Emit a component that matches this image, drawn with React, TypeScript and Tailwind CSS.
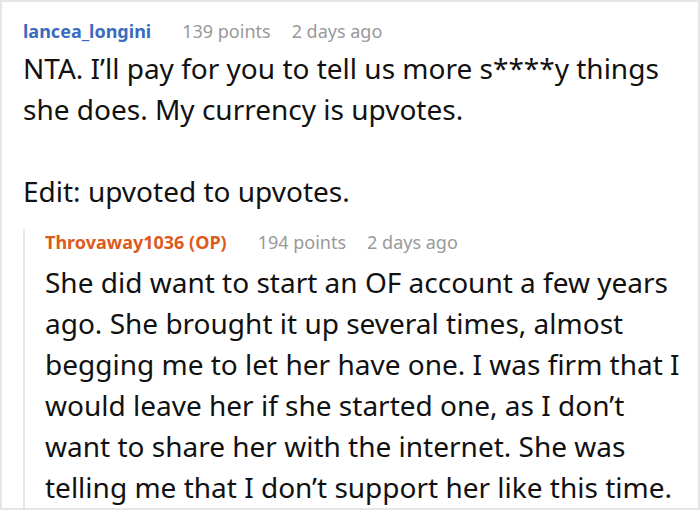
export default function App() {
  return (
    <div className="w-[700px] h-[520px] bg-white" style={{ fontFamily: '"Noto Sans", "Open Sans", sans-serif' }}>
      <div className="h-[510px] border-2 border-[#e6e6e6] pl-[21px] pr-[10px] pt-[16px] overflow-hidden">
        <div className="flex items-baseline text-[18px] leading-[26px]">
          <span className="font-bold text-[#3b6bc1] mr-[31px]">lancea_longini</span>
          <span className="text-[#999999] mr-[21px]">139 points</span>
          <span className="text-[#999999]">2 days ago</span>
        </div>
        <div className="mt-[4px] text-[28px] leading-[41px] text-[#111111]">
          <p>NTA. I’ll pay for you to tell us more s****y things she does. My currency is upvotes.</p>
          <p className="mt-[41px]">Edit: upvoted to upvotes.</p>
        </div>
        <div className="mt-[17px] border-l-2 border-[#e6e6e6] pl-[20px]">
          <div className="flex items-baseline text-[18px] leading-[26px]">
            <span className="font-bold text-[#dd5a1d] mr-[31px]">Throvaway1036 (OP)</span>
            <span className="text-[#999999] mr-[21px]">194 points</span>
            <span className="text-[#999999]">2 days ago</span>
          </div>
          <p className="mt-[7px] text-[28px] leading-[41px] text-[#111111]">
            She did want to start an OF account a few years ago. She brought it up several times, almost begging me to let her have one. I was firm that I would leave her if she started one, as I don’t want to share her with the internet. She was telling me that I don’t support her like this time.
          </p>
        </div>
      </div>
    </div>
  );
}
